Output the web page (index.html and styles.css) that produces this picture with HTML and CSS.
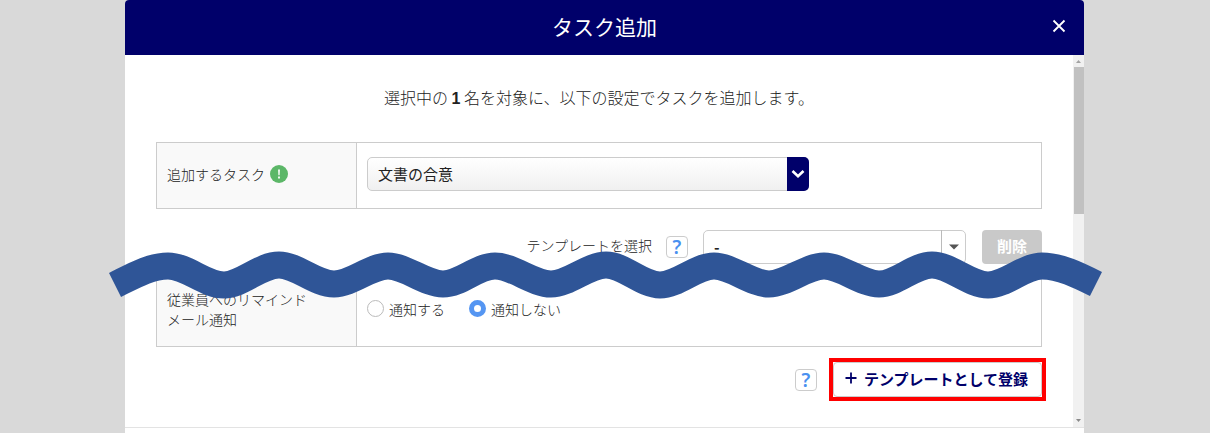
FILE: index.html
```
<!DOCTYPE html>
<html lang="ja">
<head>
  <meta charset="UTF-8">
  <meta name="viewport" content="width=device-width, initial-scale=1">
  <title>タスク追加</title>
  <link rel="stylesheet" href="styles.css">
</head>
<body>

<div class="dialog">
  <header class="dialog-header">
    <h1>タスク追加</h1>
    <button type="button" class="close-btn" aria-label="閉じる">
      <svg width="14" height="14" viewBox="0 0 14 14"><path d="M1.5 1.5 L12.5 12.5 M12.5 1.5 L1.5 12.5" fill="none" stroke="#fff" stroke-width="1.8"/></svg>
    </button>
  </header>

  <div class="dialog-body">
    <main class="content">
      <p class="lead">選択中の <strong>1</strong> 名を対象に、以下の設定でタスクを追加します。</p>

      <table class="form-table">
        <tr>
          <th scope="row">
            <div class="label-row">
              <label for="task">追加するタスク</label>
              <svg width="18" height="18" viewBox="0 0 18 18"><circle cx="9" cy="9" r="9" fill="#5cb768"/><path d="M8.1 4.5 H9.9 L9.6 10.2 H8.4 Z M8.1 11.6 H9.9 V13.4 H8.1 Z" fill="#fff"/></svg>
            </div>
          </th>
          <td>
            <div class="select-box task-select">
              <select id="task"><option>文書の合意</option></select>
              <span class="arrow">
                <svg width="14" height="10" viewBox="0 0 14 10"><path d="M1.5 2 L7 7.2 L12.5 2" fill="none" stroke="#fff" stroke-width="2.6"/></svg>
              </span>
            </div>
          </td>
        </tr>
      </table>

      <div class="template-row">
        <label for="template">テンプレートを選択</label>
        <button type="button" class="help-btn" aria-label="テンプレートの説明">?</button>
        <div class="select-box template-select">
          <select id="template"><option>-</option></select>
          <span class="arrow">
            <svg width="10" height="6" viewBox="0 0 10 6"><path d="M0 0.5 H10 L5 5.5 Z" fill="#555"/></svg>
          </span>
        </div>
        <button type="button" class="delete-btn" disabled>削除</button>
      </div>

      <table class="form-table notify-table">
        <tr>
          <th scope="row">従業員へのリマインド<br>メール通知</th>
          <td>
            <div class="radios">
              <label><input type="radio" name="notify" value="on">通知する</label>
              <label><input type="radio" name="notify" value="off" checked>通知しない</label>
            </div>
          </td>
        </tr>
      </table>

      <div class="register-row">
        <button type="button" class="help-btn" aria-label="登録の説明">?</button>
        <div class="highlight">
          <button type="button" class="register-btn">
            <svg width="12" height="12" viewBox="0 0 12 12"><path d="M6 0.5 V11.5 M0.5 6 H11.5" fill="none" stroke="#00006a" stroke-width="1.8"/></svg>
            テンプレートとして登録
          </button>
        </div>
      </div>
    </main>

    <div class="scrollbar">
      <svg width="11" height="12" viewBox="0 0 11 12"><path d="M3 8 L5.5 5 L8 8 Z" fill="#a3a3a3"/></svg>
      <div class="thumb"></div>
      <svg width="11" height="12" viewBox="0 0 11 12"><path d="M3 4 L5.5 7 L8 4 Z" fill="#8a8a8a"/></svg>
    </div>
  </div>

  <footer class="dialog-footer"></footer>

  <!-- 省略を表す波線 -->
  <svg class="wave" viewBox="109 250 993 50" preserveAspectRatio="none">
    <path fill="none" stroke="#2f5597" stroke-width="27" d="M115 285 C133 276 150 266 168 266 C187 266 205 285 224 285 C242 285 260 265 279 265 C297 265 315 284 334 284 C352 284 370 266 388 266 C406 266 425 284 443 284 C461 284 477 266 495 266 C513 266 533 284 551 284 C569 284 588 265 606 265 C624 265 642 285 660 285 C678 285 696 266 714 266 C732 266 751 284 769 284 C787 284 806 266 824 266 C842 266 861 284 879 284 C897 284 914 265 932 265 C950 265 970 285 988 285 C1006 285 1024 266 1042 266 C1060 266 1078 275 1096 284"/>
  </svg>
</div>

</body>
</html>
```
FILE: styles.css
```
* {
  box-sizing: border-box;
}

body {
  margin: 0;
  background: #d9d9d9;
  color: #222;
  font-family: "Noto Sans CJK JP", sans-serif;
  font-size: 14px;
  font-weight: 300;
  line-height: 20px;
}

button, select {
  font-family: inherit;
  margin: 0;
  padding: 0;
}

svg {
  display: block;
  flex: none;
}

.dialog {
  position: relative;
  display: flex;
  flex-direction: column;
  min-height: 100vh;
  margin: 0 126px 0 125px;
  background: #fff;
  border-radius: 4px 4px 0 0;
}

.dialog-header {
  display: grid;
  grid-template-columns: 1fr auto 1fr;
  align-items: center;
  height: 55px;
  padding: 0 18px 4px;
  background: #00006a;
  border-radius: 4px 4px 0 0;
}

.dialog-header h1 {
  grid-column: 2;
  margin: 0;
  color: #fff;
  font-size: 21px;
  font-weight: normal;
  line-height: 30px;
}

.close-btn {
  justify-self: end;
  border: none;
  background: none;
  cursor: pointer;
}

.dialog-body {
  display: flex;
}

.content {
  flex: 1;
  padding: 30px 31px;
}

.lead {
  margin: 0 0 31px;
  font-size: 16px;
  line-height: 24px;
  text-align: center;
}

.lead strong {
  font-family: "Liberation Sans", sans-serif;
  font-weight: bold;
}

.form-table {
  width: 100%;
  height: 67px;
  border-collapse: collapse;
  table-layout: fixed;
}

.form-table th, .form-table td {
  padding: 0 10px 3px;
  border: 1px solid #ccc;
  text-align: left;
}

.form-table th {
  width: 200px;
  background: #f9f9f9;
  font-weight: inherit;
}

.notify-table {
  height: 74px;
}

.label-row {
  display: flex;
  align-items: center;
  gap: 5px;
}

/* セレクトと矢印を同じセルに重ねる */
.select-box {
  display: grid;
  height: 34px;
}

.select-box select {
  grid-area: 1 / 1;
  appearance: none;
  padding: 0 10px 2px;
  border: 1px solid #ccc;
  border-radius: 5px;
  background: #fff;
  color: #222;
  font-size: 15px;
}

.select-box .arrow {
  grid-area: 1 / 1;
  justify-self: end;
  display: flex;
  align-items: center;
  justify-content: center;
  pointer-events: none;
}

.task-select {
  max-width: 442px;
}

.task-select select {
  background: linear-gradient(#fff, #f0f0f0);
}

.task-select .arrow {
  width: 22px;
  background: #00006a;
  border-radius: 0 5px 5px 0;
}

.template-select {
  width: 263px;
}

.template-select select {
  font-weight: bold;
}

.template-select .arrow {
  width: 25px;
  border-left: 1px solid #bbb;
}

.template-row {
  display: flex;
  align-items: center;
  justify-content: flex-end;
  margin: 21px 0 9px;
}

.template-row label {
  padding-bottom: 5px;
}

.template-row .help-btn {
  margin: 0 15px 0 14px;
}

.help-btn {
  width: 22px;
  height: 22px;
  border: 1px solid #ccc;
  border-radius: 4px;
  background: #fff;
  color: #4a90f0;
  font-family: "Noto Sans", sans-serif;
  font-size: 19px;
  font-weight: 600;
  line-height: 20px;
  cursor: pointer;
}

.delete-btn {
  width: 60px;
  height: 34px;
  margin-left: 16px;
  padding-bottom: 4px;
  border: none;
  border-radius: 4px;
  background: #c9c9c9;
  color: #fff;
  font-size: 15px;
  font-weight: bold;
}

.radios {
  display: flex;
  gap: 24px;
}

.radios label {
  display: flex;
  align-items: center;
  gap: 5px;
}

.radios input {
  appearance: none;
  width: 17px;
  height: 17px;
  margin: 0;
  border: 1px solid #bbb;
  border-radius: 50%;
  background: #fff;
}

.radios input:checked {
  border: 5px solid #5596f2;
}

.register-row {
  display: flex;
  align-items: center;
  justify-content: flex-end;
  gap: 16px;
  margin-top: 15px;
}

.highlight {
  outline: 4px solid #f00;
}

.register-btn {
  display: flex;
  align-items: center;
  gap: 7px;
  height: 35px;
  padding: 0 13px 3px 11px;
  border: 1px solid #ccc;
  border-radius: 4px;
  background: #fff;
  color: #00006a;
  font-size: 15px;
  font-weight: bold;
  cursor: pointer;
}

.scrollbar {
  display: flex;
  flex-direction: column;
  width: 11px;
  background: #f1f1f1;
}

.scrollbar .thumb {
  height: 147px;
  margin: 0 0 auto 1px;
  background: #c1c1c1;
}

.dialog-footer {
  flex: 1;
  min-height: 6px;
  border-top: 1px solid #e3e3e3;
}

.wave {
  position: absolute;
  top: 250px;
  left: -16px;
  width: calc(100% + 34px);
  height: 50px;
}
```
